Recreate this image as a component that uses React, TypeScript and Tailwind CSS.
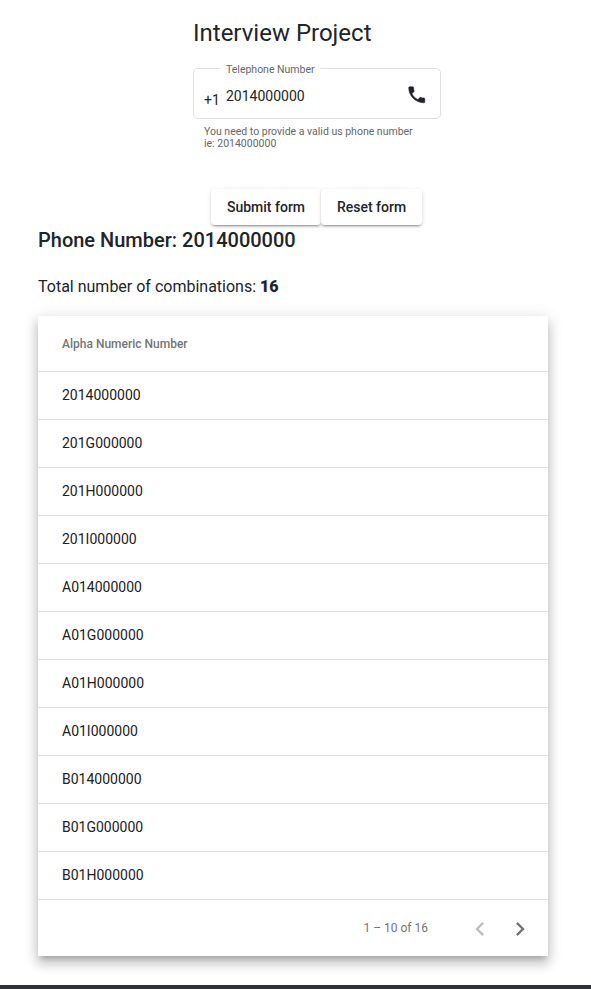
import React from "react";

const combinations: string[] = [
  "2014000000",
  "201G000000",
  "201H000000",
  "201I000000",
  "A014000000",
  "A01G000000",
  "A01H000000",
  "A01I000000",
  "B014000000",
  "B01G000000",
  "B01H000000",
];

const RAISED =
  "shadow-[0_3px_1px_-2px_rgba(0,0,0,0.2),0_2px_2px_0_rgba(0,0,0,0.14),0_1px_5px_0_rgba(0,0,0,0.12)]";

function Icon({ d, className }: { d: string; className: string }) {
  return (
    <svg viewBox="0 0 24 24" fill="currentColor" className={className} aria-hidden="true">
      <path d={d} />
    </svg>
  );
}

function PhoneField() {
  return (
    <div className="w-[248px]">
      <fieldset className="-mt-px h-[57px] min-w-0 rounded-[5px] border border-[#e0e0e0] pl-[10px]">
        <legend className="ml-[17px] h-[13px] px-[5px] text-[10.5px] leading-[16px] whitespace-nowrap text-[#666]">
          Telephone Number
        </legend>
        <div className="flex h-[43px] text-sm leading-4">
          <span className="mt-[17px] w-[22px]">+1</span>
          <span className="mt-[13px] w-[180px] shrink-0">2014000000</span>
          <Icon
            className="mt-[8.5px] size-[21.5px] shrink-0 stroke-current stroke-[0.6]"
            d="M6.62 10.79c1.44 2.83 3.76 5.14 6.59 6.59l2.2-2.2c.27-.27.67-.36 1.02-.24 1.12.37 2.33.57 3.57.57.55 0 1 .45 1 1V20c0 .55-.45 1-1 1-9.39 0-17-7.61-17-17 0-.55.45-1 1-1h3.5c.55 0 1 .45 1 1 0 1.25.2 2.45.57 3.57.11.35.03.74-.25 1.02l-2.2 2.2z"
          />
        </div>
      </fieldset>
      <p className="mt-[7px] pl-[11px] text-[10.5px] leading-[12px] text-[#666]">
        You need to provide a valid us phone number
        <br />
        ie: 2014000000
      </p>
    </div>
  );
}

function RaisedButton({ children, className }: { children: React.ReactNode; className: string }) {
  return (
    <button className={`h-9 rounded-[4px] bg-white text-sm font-medium ${RAISED} ${className}`}>
      {children}
    </button>
  );
}

export default function App() {
  return (
    <div className="h-[989px] overflow-hidden bg-white font-['Roboto',sans-serif] text-[#212529]">
      <div className="flex h-[985px] flex-col">
        <header className="ml-[193px]">
          <h1 className="mt-[17px] h-[46px] text-2xl leading-8">Interview Project</h1>
          <PhoneField />
        </header>
        <div className="mt-[39px] ml-[211px] flex">
          <RaisedButton className="w-[110px]">Submit form</RaisedButton>
          <RaisedButton className="w-[101px]">Reset form</RaisedButton>
        </div>
        <main className="mx-[38px] w-[510px]">
          <h2 className="mt-[3px] text-xl leading-6 font-medium">Phone Number: 2014000000</h2>
          <p className="mt-[23px] text-base leading-6">
            Total number of combinations: <strong className="font-black">16</strong>
          </p>
          <section className="mt-[17px] bg-white shadow-[0_5px_5px_-3px_rgba(0,0,0,0.2),0_8px_10px_1px_rgba(0,0,0,0.14),0_3px_14px_2px_rgba(0,0,0,0.12)]">
            <div className="flex h-14 items-center border-b border-[#e0e0e0] pl-6 text-xs font-medium text-[#757575]">
              Alpha Numeric Number
            </div>
            {combinations.map((value) => (
              <div
                key={value}
                className="flex h-12 items-center border-b border-[#e0e0e0] pb-px pl-6 text-sm text-[#212121]"
              >
                {value}
              </div>
            ))}
            <div className="flex h-14 items-center justify-end pr-2 text-xs text-[#757575]">
              <span className="mr-8">1 – 10 of 16</span>
              <button className="flex size-10 items-center justify-center text-[#bdbdbd]">
                <Icon className="mt-[2px] size-7" d="M15.41 7.41L14 6l-6 6 6 6 1.41-1.41L10.83 12z" />
              </button>
              <button className="flex size-10 items-center justify-center">
                <Icon className="mt-[2px] size-7" d="M10 6L8.59 7.41 13.17 12l-4.58 4.59L10 18l6-6z" />
              </button>
            </div>
          </section>
        </main>
      </div>
      <footer className="h-1 bg-[#303136]" />
    </div>
  );
}
